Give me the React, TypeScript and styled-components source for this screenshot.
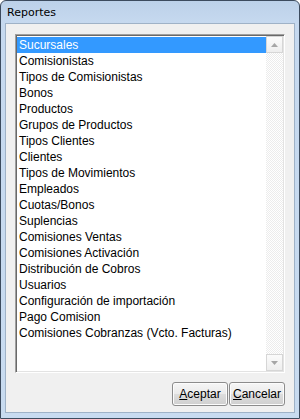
import React from "react";
import styled, { createGlobalStyle } from "styled-components";

const Global = createGlobalStyle`
  html, body { margin: 0; padding: 0; background: #ffffff; }
  body { width: 300px; height: 419px; overflow: hidden; }
`;

const Window = styled.div`
  box-sizing: border-box;
  width: 300px;
  height: 419px;
  border: 1px solid #3c4b5e;
  border-radius: 6px 6px 0 0;
  background: linear-gradient(180deg, #bcd1e9 0px, #c6d9ef 22px, #c8dbf0 100%);
  display: flex;
  flex-direction: column;
  padding: 0 4px 5px 4px;
  font-family: "Liberation Sans", Arial, sans-serif;
`;

const TitleBar = styled.div`
  height: 22px;
  display: flex;
  align-items: center;
  padding-left: 2px;
  font-family: "DejaVu Sans", "Noto Sans", sans-serif;
  font-size: 11px;
  color: #000;
  flex: none;
`;

const Client = styled.div`
  flex: 1;
  box-sizing: border-box;
  background: #f0f0f0;
  border: 1px solid #9fb2c7;
  display: flex;
  flex-direction: column;
  padding: 10px 9px 4px 9px;
  gap: 9px;
`;

const ListBox = styled.div`
  box-sizing: border-box;
  height: 339px;
  background: #fff;
  border-style: solid;
  border-width: 1px;
  border-color: #a0a0a0 #ffffff #ffffff #a0a0a0;
  box-shadow: inset 1px 1px 0 #696969, inset -1px -1px 0 #e3e3e3;
  display: flex;
  padding: 1px;
`;

const Items = styled.div`
  flex: 1;
  display: flex;
  flex-direction: column;
  padding-top: 1px;
`;

const Item = styled.div<{ $selected?: boolean }>`
  height: 16px;
  line-height: 16px;
  font-size: 12px;
  padding-left: 2px;
  white-space: nowrap;
  color: ${(p) => (p.$selected ? "#fff" : "#000")};
  background: ${(p) => (p.$selected ? "#3399ff" : "transparent")};
`;

const ScrollBar = styled.div`
  width: 17px;
  display: flex;
  flex-direction: column;
  background-color: #f4f4f4;
  background-image: repeating-conic-gradient(#ffffff 0 25%, #ececec 0 50%);
  background-size: 2px 2px;
`;

const ScrollArrow = styled.div`
  box-sizing: border-box;
  width: 17px;
  height: 17px;
  border: 1px solid #d6d6d6;
  background: linear-gradient(180deg, #fbfbfb, #eeeeee);
  display: flex;
  align-items: center;
  justify-content: center;
`;

const Track = styled.div`
  flex: 1;
`;

const ButtonRow = styled.div`
  display: flex;
  justify-content: flex-end;
  gap: 1px;
`;

const Button = styled.div`
  box-sizing: border-box;
  width: 56px;
  height: 24px;
  border: 1px solid #8c8c8c;
  border-radius: 3px;
  background: linear-gradient(180deg, #f6f6f6 0%, #ebebeb 48%, #dddddd 52%, #cfcfcf 100%);
  box-shadow: inset 0 0 0 1px #fcfcfc;
  display: flex;
  align-items: center;
  justify-content: center;
  font-size: 12px;
  color: #000;
`;

const U = styled.span`
  text-decoration: underline;
`;

const items = [
  "Sucursales",
  "Comisionistas",
  "Tipos de Comisionistas",
  "Bonos",
  "Productos",
  "Grupos de Productos",
  "Tipos Clientes",
  "Clientes",
  "Tipos de Movimientos",
  "Empleados",
  "Cuotas/Bonos",
  "Suplencias",
  "Comisiones Ventas",
  "Comisiones Activación",
  "Distribución de Cobros",
  "Usuarios",
  "Configuración de importación",
  "Pago Comision",
  "Comisiones Cobranzas (Vcto. Facturas)",
];

const Arrow = ({ up }: { up?: boolean }) => (
  <svg width="7" height="4" viewBox="0 0 7 4">
    <polygon points={up ? "3.5,0 7,4 0,4" : "0,0 7,0 3.5,4"} fill="#a6a6a6" />
  </svg>
);

export default function App() {
  return (
    <>
      <Global />
      <Window>
        <TitleBar>Reportes</TitleBar>
        <Client>
          <ListBox>
            <Items>
              {items.map((t, i) => (
                <Item key={t} $selected={i === 0}>
                  {t}
                </Item>
              ))}
            </Items>
            <ScrollBar>
              <ScrollArrow>
                <Arrow up />
              </ScrollArrow>
              <Track />
              <ScrollArrow>
                <Arrow />
              </ScrollArrow>
            </ScrollBar>
          </ListBox>
          <ButtonRow>
            <Button>
              <U>A</U>ceptar
            </Button>
            <Button>
              <U>C</U>ancelar
            </Button>
          </ButtonRow>
        </Client>
      </Window>
    </>
  );
}
